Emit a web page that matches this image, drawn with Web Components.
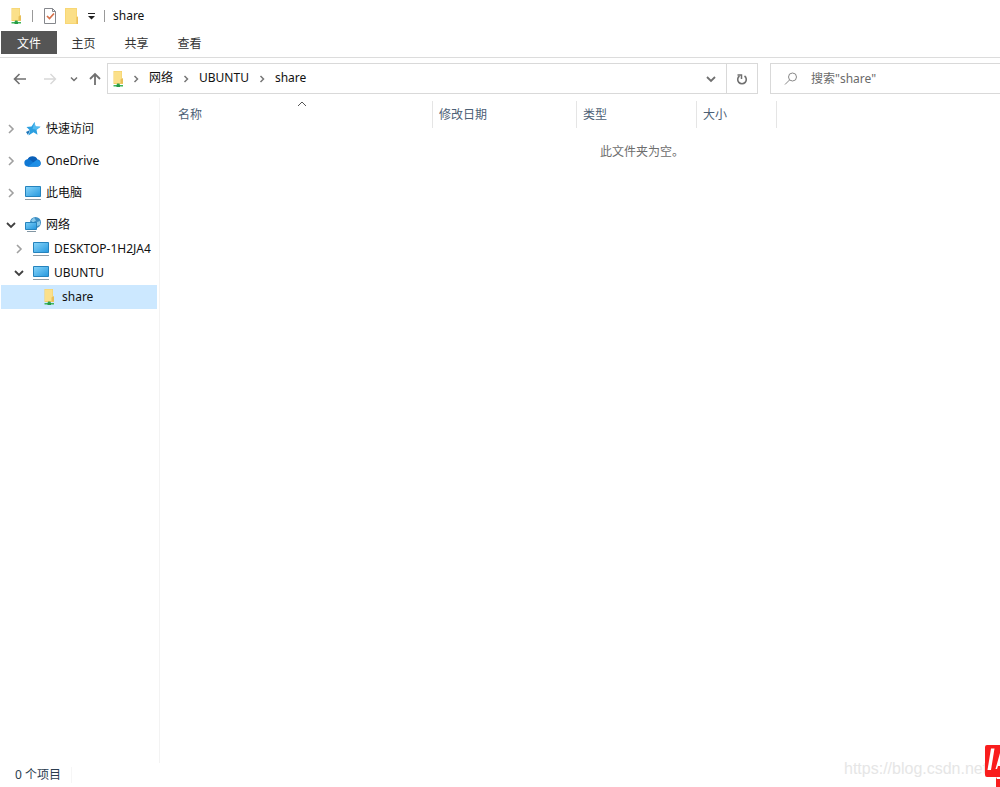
<!DOCTYPE html>
<html lang="zh-CN">
<head>
<meta charset="utf-8">
<title>share</title>
<style>
html, body { margin: 0; height: 100%; }
body { background: #fff; color: #111; font: 12px/16px "Noto Sans", "Noto Sans CJK SC", sans-serif; }
</style>
</head>
<body>
<explorer-window></explorer-window>
<script>
const define = (name, html, setup) => {
  const tpl = document.createElement('template');
  tpl.innerHTML = html;
  customElements.define(name, class extends HTMLElement {
    constructor() {
      super();
      this.attachShadow({ mode: 'open' }).append(tpl.content.cloneNode(true));
    }
    connectedCallback() { if (setup) setup(this, this.shadowRoot); }
  });
};

/* Icon set: [viewBox width, viewBox height, markup] */
const stroke = (d, w) => `<path d="${d}" fill="none" stroke="currentColor" stroke-width="${w}"/>`;
const icons = {
  netfolder: [16, 18, '<path d="M3.500 1H12v8l1 1v4H3.500z" fill="#f3cf66"/><path d="M4 1.500h7.500V13H4z" fill="#fbe08a"/><path d="M10.500 9.500L13 8v5.500h-2.500z" fill="#e8bf58"/><path d="M7 13.500h2.500V16H7z" fill="#35a852"/><path d="M3.500 15h9.500v1.500H3.500z" fill="#3db45a"/><path d="M6.500 14.500h3.500v2.500H6.500z" fill="#279b46"/>'],
  folder: [16, 18, '<path d="M1 1h12v8l1 1v7H1z" fill="#f8d775"/><path d="M2 2h10v14H2z" fill="#fbdf87"/><path d="M12.500 10H14v7h-1.500z" fill="#ecc05b"/>'],
  check: [14, 18, '<path d="M1.500 1.500h8l3 3v12h-11z" fill="#fff" stroke="#85878c"/><path d="M9.500 1.500v3h3" fill="none" stroke="#85878c"/><path d="M4 9l2.500 2.500L11 6.500" fill="none" stroke="#d5704a" stroke-width="1.700"/>'],
  custom: [9, 8, '<path d="M1 1h7v1H1zM1 4h7L4.500 7.500z" fill="#222"/>'],
  back: [16, 16, stroke('M14 8H3M7.500 3L2.500 8l5 5', 1.6)],
  forward: [16, 16, stroke('M2 8h11M8.500 3l5 5-5 5', 1.4)],
  up: [16, 16, stroke('M8 14V3M3 8l5-5 5 5', 1.8)],
  right: [10, 10, stroke('M3.500 2l3 3-3 3', 1.5)],
  treeright: [10, 10, stroke('M3 1l4 4-4 4', 1.6)],
  down: [10, 10, stroke('M1 3l4 4 4-4', 1.8)],
  small: [8, 8, stroke('M1 2.500l3 3 3-3', 1.5)],
  sort: [10, 6, stroke('M1 5l4-4 4 4', 1)],
  refresh: [14, 14, stroke('M9.500 4a4.300 4.300 0 1 1-5 0', 1.6) + stroke('M2.500 3H6.500V7', 1.5)],
  search: [16, 16, '<circle cx="9.500" cy="6" r="4" fill="none" stroke="currentColor"/>' + stroke('M6.500 9L2 13.500', 1)],
  star: [16, 16, '<path d="M9.500 1l1 4.500 5 .2-4 3 1 5-4-2.500L3.500 14.500l1.500-5L1.500 6l5-.5z" fill="#2b9fe0"/><path d="M9.500 1l1 4.500 5 .2-4 3-4-.7z" fill="#55bcf0"/><path d="M1 11l4-2-2 5" fill="#1c75b8"/>'],
  cloud: [18, 12, '<path d="M4 11.500a4 4 0 0 1-.5-7A5.500 5.500 0 0 1 13.500 4.500a3.600 3.600 0 0 1 .7 7z" fill="#0a5fb8"/><path d="M4 11.500a3.600 3.600 0 0 1 0-7.300c2 0 3 1 10 7.300z" fill="#0f78d4"/><path d="M4 11.500L12.500 5c4-1 6 5.500 1.700 6.500z" fill="#1e8fe6"/>'],
  pc: [18, 16, '<defs><linearGradient id="g" x2="1" y2="1"><stop stop-color="#8ad6fa"/><stop offset="1" stop-color="#2598de"/></linearGradient></defs><path d="M1.500 1.500h15v10h-15z" fill="url(#g)" stroke="#2583bd"/><path d="M1 14h16v1H1z" fill="#8f9ca5"/>'],
  network: [18, 18, '<defs><linearGradient id="g" x2="1" y2="1"><stop stop-color="#7dd0f8"/><stop offset="1" stop-color="#1f93dc"/></linearGradient></defs><circle cx="11.500" cy="6.500" r="5.500" fill="#3e8fc4"/><path d="M10 1.500l2 3-3 2-2-2zM13 6l3-1v4l-3 1z" fill="#8ac9ea"/><path d="M1.500 6.500h11v7h-11z" fill="url(#g)" stroke="#2583bd"/><path d="M3 15h9v1H3z" fill="#8296a3"/>']
};
define('x-icon', `<style>:host { display: inline-flex; flex: none; } svg { display: block; }</style><span></span>`,
  (el, root) => {
    const [w, h, body] = icons[el.getAttribute('name')];
    root.querySelector('span').innerHTML = `<svg width="${w}" height="${h}" viewBox="0 0 ${w} ${h}" aria-hidden="true">${body}</svg>`;
  });

define('title-bar', `<style>
:host { display: flex; align-items: center; gap: 8px; height: 31px; padding-left: 8px; }
button { display: flex; border: 0; padding: 0; background: none; }
i { width: 1px; height: 12px; background: #999; }
.quick { display: flex; align-items: center; gap: 7px; margin-left: 2px; }
h1 { margin: 0; font: inherit; }
</style>
<x-icon name="netfolder"></x-icon><i></i>
<div class="quick">
<button aria-label="属性"><x-icon name="check"></x-icon></button>
<button aria-label="新建文件夹"><x-icon name="folder"></x-icon></button>
<button aria-label="自定义快速访问工具栏"><x-icon name="custom"></x-icon></button>
</div><i></i>
<h1><slot></slot></h1>`);

define('ribbon-tabs', `<style>
:host { display: flex; height: 26px; padding-left: 1px; border-bottom: 1px solid #dcdcdc; }
button { border: 0; padding: 2px 0 0; height: 23px; background: none; font: inherit; color: #333; }
button.file { width: 56px; background: #555; color: #fff; }
nav { display: flex; }
nav button { width: 53px; }
</style>
<button class="file">文件</button>
<nav><button>主页</button><button>共享</button><button>查看</button></nav>`);

define('address-bar', `<style>
:host { display: flex; align-items: center; padding: 5px 0 0 12px; }
button { display: flex; align-items: center; justify-content: center; border: 0; padding: 0; background: none; color: #707070; }
.history { display: flex; align-items: center; width: 95px; gap: 12px; }
.history .next { color: #d8d8d8; margin-left: 2px; }
.history button + button + button { margin-right: -3px; }
.history button:last-child { margin: 0; }
.path { display: flex; align-items: center; flex: 1; height: 29px; border: 1px solid #d9d9d9; }
.path > x-icon { margin-left: 2px; }
ol { display: flex; flex: 1; margin: 0; padding: 0; list-style: none; }
li { display: flex; align-items: center; gap: 8px; padding-left: 5px; color: #777; }
li + li { padding-left: 8px; }
a { padding-bottom: 2px; color: #111; text-decoration: none; }
.drop { width: 30px; height: 29px; }
.refresh { width: 31px; height: 29px; border-left: 1px solid #d9d9d9; }
form { display: flex; align-items: center; width: 229px; height: 29px; margin-left: 12px; border: 1px solid #d9d9d9; border-right: 0; color: #888; }
form x-icon { margin: 0 12px; }
input { flex: 1; min-width: 0; border: 0; padding: 0; outline: 0; background: none; font: inherit; color: #666; }
input::placeholder { color: #6a6a6a; opacity: 1; }
</style>
<div class="history">
<button aria-label="后退"><x-icon name="back"></x-icon></button>
<button class="next" aria-label="前进"><x-icon name="forward"></x-icon></button>
<button aria-label="最近浏览的位置"><x-icon name="small"></x-icon></button>
<button aria-label="上移"><x-icon name="up"></x-icon></button>
</div>
<div class="path">
<x-icon name="netfolder"></x-icon>
<ol>
<li><x-icon name="right"></x-icon><a href="#network">网络</a></li>
<li><x-icon name="right"></x-icon><a href="#ubuntu">UBUNTU</a></li>
<li><x-icon name="right"></x-icon><a href="#share">share</a></li>
</ol>
<button class="drop" aria-label="以前的位置"><x-icon name="down"></x-icon></button>
<button class="refresh" aria-label="刷新"><x-icon name="refresh"></x-icon></button>
</div>
<form role="search"><x-icon name="search"></x-icon><input type="text" aria-label="搜索" placeholder='搜索"share"'></form>`);

define('tree-item', `<style>
:host { display: block; }
:host([root]) { margin-bottom: 8px; }
:host([root][last]) { margin-bottom: 0; }
a { display: flex; align-items: center; height: 24px; gap: 4px; padding-left: 5px; color: #111; text-decoration: none; white-space: nowrap; }
:host([level="1"]) a { padding-left: 13px; }
:host([level="2"]) a { padding-left: 21px; }
:host([selected]) a { background: #cce8ff; }
.arrow { display: flex; width: 10px; margin-right: 4px; color: #a0a0a0; }
:host([open]) .arrow { color: #404040; }
.pic { display: flex; justify-content: center; width: 18px; }
</style>
<a><span class="arrow"></span><span class="pic"></span><slot></slot></a>`,
  (el, root) => {
    root.querySelector('a').href = '#' + el.textContent;
    if (!el.hasAttribute('leaf'))
      root.querySelector('.arrow').innerHTML = `<x-icon name="${el.hasAttribute('open') ? 'down' : 'treeright'}"></x-icon>`;
    root.querySelector('.pic').innerHTML = `<x-icon name="${el.getAttribute('icon')}"></x-icon>`;
  });

define('nav-tree', `<style>
:host { display: block; box-sizing: border-box; width: 160px; padding: 19px 2px 0 1px; border-right: 1px solid #f3f3f3; overflow: hidden; }
</style>
<nav aria-label="导航窗格">
<tree-item root icon="star">快速访问</tree-item>
<tree-item root icon="cloud">OneDrive</tree-item>
<tree-item root icon="pc">此电脑</tree-item>
<tree-item root last open icon="network">网络</tree-item>
<tree-item level="1" icon="pc">DESKTOP-1H2JA4</tree-item>
<tree-item level="1" open icon="pc">UBUNTU</tree-item>
<tree-item level="2" leaf selected icon="netfolder">share</tree-item>
</nav>`);

define('file-list', `<style>
:host { display: block; flex: 1; min-width: 0; padding: 3px 0 0 12px; }
table { border-collapse: separate; border-spacing: 0; table-layout: fixed; width: 605px; }
th { position: relative; box-sizing: border-box; height: 27px; padding: 0 6px; border-right: 1px solid #e5e5e5; font-weight: 400; text-align: left; color: #4c6075; }
th x-icon { position: absolute; top: 0; left: 50%; margin-left: -5px; color: #555; }
p { margin: 16px 0 0; padding-left: 112px; text-align: center; color: #6d6d6d; }
</style>
<table>
<colgroup><col style="width:261px"><col style="width:144px"><col style="width:120px"><col style="width:80px"></colgroup>
<thead><tr><th scope="col" aria-sort="ascending">名称<x-icon name="sort"></x-icon></th><th scope="col">修改日期</th><th scope="col">类型</th><th scope="col">大小</th></tr></thead>
</table>
<p>此文件夹为空。</p>`);

define('status-bar', `<style>
:host { display: flex; align-items: center; height: 24px; padding-left: 15px; color: #2b3d4f; }
span { padding-right: 10px; border-right: 1px solid #f6f6f6; }
</style><span><slot></slot></span>`);

define('page-mark', `<style>
:host { position: absolute; right: 0; bottom: 0; display: block; width: 156px; height: 42px; overflow: hidden; font: 16px/18px "Liberation Sans", sans-serif; color: #e6e6e6; white-space: nowrap; }
span { display: block; padding-top: 15px; }
svg { position: absolute; right: 0; bottom: 0; }
</style>
<span>https://blog.csdn.net</span>
<svg width="15" height="42" viewBox="0 0 15 42" aria-hidden="true">
<path d="M2 0h13v42h-4v-10H2a2 2 0 0 1-2-2V2a2 2 0 0 1 2-2z" fill="#f91d1d"/>
<path d="M6 3.500h3.500L6 25H2.500z" fill="#fff"/><path d="M15 8v13h-2l-1 3h-1.500z" fill="#fff"/>
<path d="M11 32h4v2h-3z" fill="#fff"/>
</svg>`);

define('explorer-window', `<style>
:host { position: relative; display: flex; flex-direction: column; min-height: 100vh; overflow: hidden; background: #fff; }
main { display: flex; flex: 1; margin-top: 4px; }
</style>
<title-bar>share</title-bar>
<ribbon-tabs></ribbon-tabs>
<address-bar></address-bar>
<main><nav-tree></nav-tree><file-list></file-list></main>
<status-bar>0 个项目</status-bar>
<page-mark></page-mark>`);
</script>
</body>
</html>
